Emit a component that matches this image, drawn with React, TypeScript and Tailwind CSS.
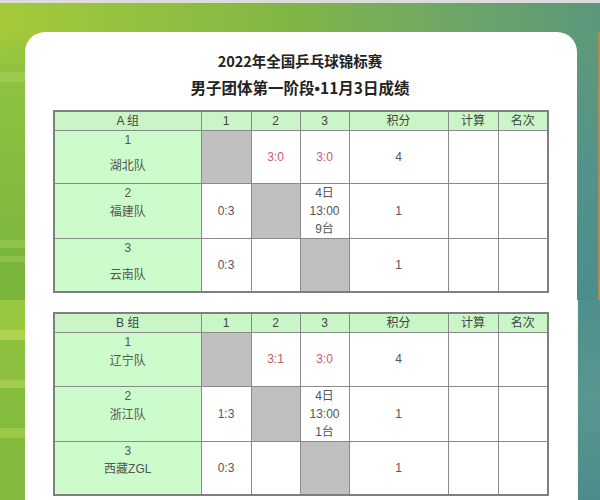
import React from "react";

type Cell = { kind: "gray" } | { kind: "text"; lines: string[]; red?: boolean };

type Row = {
  no: string;
  name: string;
  nameGap: string;
  height: string;
  cells: Cell[];
  pts: string;
};

const gray: Cell = { kind: "gray" };
const txt = (lines: string[], red = false): Cell => ({ kind: "text", lines, red });

const groups: { label: string; rows: Row[]; wrap: string }[] = [
  {
    label: "A 组",
    wrap: "mt-[11px]",
    rows: [
      { no: "1", name: "湖北队", nameGap: "mt-[8px]", height: "h-[53px]", cells: [gray, txt(["3:0"], true), txt(["3:0"], true)], pts: "4" },
      { no: "2", name: "福建队", nameGap: "mt-[1px]", height: "h-[52px]", cells: [txt(["0:3"]), gray, txt(["4日", "13:00", "9台"])], pts: "1" },
      { no: "3", name: "云南队", nameGap: "mt-[9px]", height: "h-[53px]", cells: [txt(["0:3"]), txt([]), gray], pts: "1" },
    ],
  },
  {
    label: "B 组",
    wrap: "mt-[19px]",
    rows: [
      { no: "1", name: "辽宁队", nameGap: "mt-[1px]", height: "h-[54px]", cells: [gray, txt(["3:1"], true), txt(["3:0"], true)], pts: "4" },
      { no: "2", name: "浙江队", nameGap: "mt-[1px]", height: "h-[54px]", cells: [txt(["1:3"]), gray, txt(["4日", "13:00", "1台"])], pts: "1" },
      { no: "3", name: "西藏ZGL", nameGap: "mt-[0px]", height: "h-[54px]", cells: [txt(["0:3"]), txt([]), gray], pts: "1" },
    ],
  },
];

const headers = ["1", "2", "3", "积分", "计算", "名次"];

function GroupTable({ label, rows, wrap }: { label: string; rows: Row[]; wrap: string }) {
  return (
    <table className={`${wrap} w-[494px] table-fixed border-collapse border-2 border-[#7f7f7f] text-[12px] leading-[18px] text-[#555]`}>
      <colgroup>
        <col className="w-[147px]" />
        <col className="w-[50px]" />
        <col className="w-[49px]" />
        <col className="w-[49px]" />
        <col className="w-[99px]" />
        <col className="w-[50px]" />
        <col className="w-[50px]" />
      </colgroup>
      <thead>
        <tr className="h-[18px] bg-[#c9f5c7] text-[#444]">
          <th className="border border-[#8a8a8a] p-0 text-center font-normal">{label}</th>
          {headers.map((h) => (
            <th key={h} className="border border-[#8a8a8a] p-0 text-center font-normal">
              {h}
            </th>
          ))}
        </tr>
      </thead>
      <tbody>
        {rows.map((r) => (
          <tr key={r.no} className={r.height}>
            <td className="border border-[#8a8a8a] bg-[#ccfccc] p-0 align-top text-center">
              <div>{r.no}</div>
              <div className={r.nameGap}>{r.name}</div>
            </td>
            {r.cells.map((c, i) =>
              c.kind === "gray" ? (
                <td key={i} className="border border-[#8a8a8a] bg-[#c0c0c0] p-0" />
              ) : (
                <td
                  key={i}
                  className={`border border-[#8a8a8a] bg-white p-0 text-center align-middle ${c.red ? "text-[#c65b6b]" : ""}`}
                >
                  {c.lines.map((l) => (
                    <div key={l}>{l}</div>
                  ))}
                </td>
              )
            )}
            <td className="border border-[#8a8a8a] bg-white p-0 text-center align-middle">{r.pts}</td>
            <td className="border border-[#8a8a8a] bg-white p-0" />
            <td className="border border-[#8a8a8a] bg-white p-0" />
          </tr>
        ))}
      </tbody>
    </table>
  );
}

export default function App() {
  return (
    <div className="flex h-[500px] w-[600px] flex-col overflow-hidden bg-[#d9d9d9] font-['Liberation_Sans','Noto_Sans_CJK_SC',sans-serif]">
      <div className="h-[3px] bg-[#dcdcdc]" />
      <div className="flex flex-1 bg-gradient-to-r from-[#a4ca3a] via-[#80b545] to-[#5b977b]">
        {/* left decoration strip */}
        <div className="flex w-[25px] flex-col pt-[29px]">
          <div className="h-[40px] bg-gradient-to-b from-transparent to-[#90c240]" />
          <div className="h-[10px] bg-[#9dc94e]" />
          <div className="h-[158px] bg-gradient-to-b from-[#8ec13f] to-[#7fb83e]" />
          <div className="h-[8px] bg-[#8fc24a]" />
          <div className="h-[8px] bg-[#7bb63c]" />
          <div className="h-[6px] bg-[#8cc04a]" />
          <div className="h-[38px] bg-[#7ab53c]" />
          <div className="h-[30px] bg-[#98c740]" />
          <div className="h-[10px] bg-[#b0d24e]" />
          <div className="h-[40px] bg-[#8cc03e]" />
          <div className="h-[8px] bg-[#a2cc4a]" />
          <div className="h-[40px] bg-[#84bd3d]" />
          <div className="h-[10px] bg-[#9cc948]" />
          <div className="flex-1 bg-[#82bb3d]" />
        </div>

        {/* card */}
        <div className="flex flex-1 flex-col">
          <div className="h-[29px]" />
          <div className="flex-1 rounded-t-[20px] bg-white pl-[28px]">
            <div className="w-[494px] pt-[19px] text-center font-['Noto_Sans_CJK_SC',sans-serif] font-bold text-[#222]">
              <div className="text-[14.5px] leading-[20px]">2022年全国乒乓球锦标赛</div>
              <div className="mt-[6px] text-[15.5px] leading-[20px]">
                男子团体第一阶段<span className="font-['Liberation_Sans',sans-serif]">•</span>11月3日成绩
              </div>
            </div>
            {groups.map((g) => (
              <GroupTable key={g.label} label={g.label} rows={g.rows} wrap={g.wrap} />
            ))}
          </div>
        </div>

        {/* right decoration strip */}
        <div className="flex w-[23px] flex-col pt-[29px]">
          <div className="flex h-[268px]">
            <div className="flex-1 bg-gradient-to-b from-[#5d9a78] via-[#54938a] to-[#4c8d8d]" />
            <div className="w-[2px] bg-[#b58a55]" />
          </div>
          <div className="flex flex-1">
            <div className="w-[1px] bg-[#eef5f2]" />
            <div className="flex-1 bg-gradient-to-b from-[#4f8f8c] via-[#5a9690] to-[#4d8c8b]" />
          </div>
        </div>
      </div>
    </div>
  );
}
